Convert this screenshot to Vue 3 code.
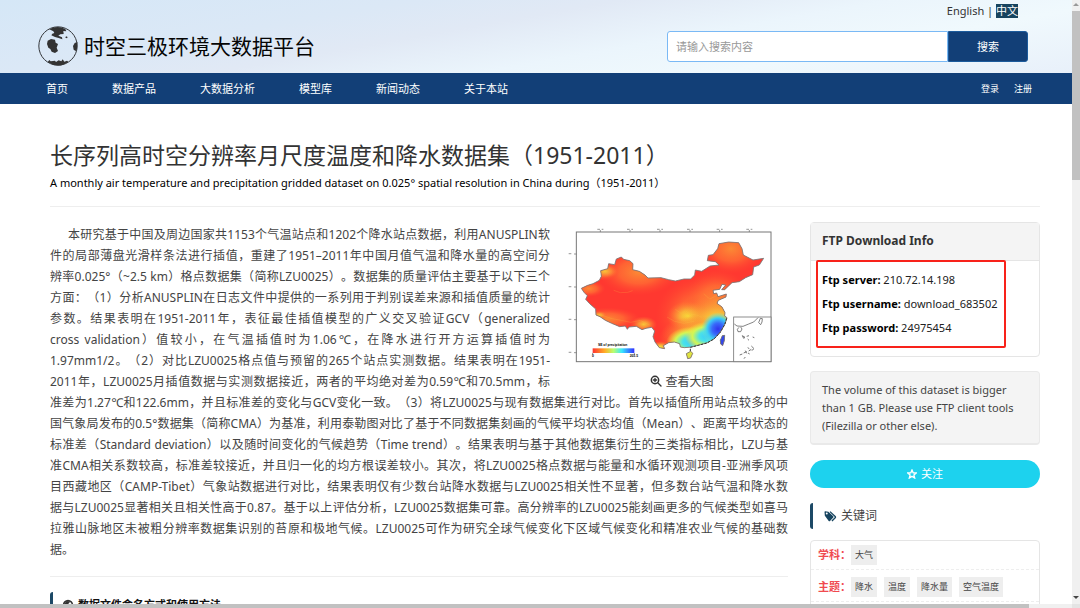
<script setup>
const navItems = ['首页', '数据产品', '大数据分析', '模型库', '新闻动态', '关于本站']

const abstractLines = [
  '本研究基于中国及周边国家共1153个气温站点和1202个降水站点数据，利用ANUSPLIN软',
  '件的局部薄盘光滑样条法进行插值，重建了1951–2011年中国月值气温和降水量的高空间分',
  '辨率0.025°（~2.5 km）格点数据集（简称LZU0025）。数据集的质量评估主要基于以下三个',
  '方面：（1）分析ANUSPLIN在日志文件中提供的一系列用于判别误差来源和插值质量的统计',
  '参数。结果表明在1951-2011年，表征最佳插值模型的广义交叉验证GCV（generalized',
  'cross validation）值较小，在气温插值时为1.06℃，在降水进行开方运算插值时为',
  '1.97mm1/2。（2）对比LZU0025格点值与预留的265个站点实测数据。结果表明在1951-',
  '2011年，LZU0025月插值数据与实测数据接近，两者的平均绝对差为0.59℃和70.5mm，标',
  '准差为1.27℃和122.6mm，并且标准差的变化与GCV变化一致。（3）将LZU0025与现有数据集进行对比。首先以插值所用站点较多的中',
  '国气象局发布的0.5°数据集（简称CMA）为基准，利用泰勒图对比了基于不同数据集刻画的气候平均状态均值（Mean）、距离平均状态的',
  '标准差（Standard deviation）以及随时间变化的气候趋势（Time trend）。结果表明与基于其他数据集衍生的三类指标相比，LZU与基',
  '准CMA相关系数较高，标准差较接近，并且归一化的均方根误差较小。其次，将LZU0025格点数据与能量和水循环观测项目-亚洲季风项',
  '目西藏地区（CAMP-Tibet）气象站数据进行对比，结果表明仅有少数台站降水数据与LZU0025相关性不显著，但多数台站气温和降水数',
  '据与LZU0025显著相关且相关性高于0.87。基于以上评估分析，LZU0025数据集可靠。高分辨率的LZU0025能刻画更多的气候类型如喜马',
  '拉雅山脉地区未被粗分辨率数据集识别的苔原和极地气候。LZU0025可作为研究全球气候变化下区域气候变化和精准农业气候的基础数',
  '据。'
]

const ftp = [
  { label: 'Ftp server:', value: '210.72.14.198' },
  { label: 'Ftp username:', value: 'download_683502' },
  { label: 'Ftp password:', value: '24975454' }
]

const keywords = [
  { label: '学科：', tags: ['大气'] },
  { label: '主题：', tags: ['降水', '温度', '降水量', '空气温度'] }
]
</script>

<template>
  <div class="viewport">
    <div class="page">
      <header class="top">
        <div class="brand">
          <svg class="globe" viewBox="114 78 120 120" aria-hidden="true">
            <circle cx="174" cy="138" r="57.5" fill="none" stroke="#33363a" stroke-width="3" />
            <path fill="#333" d="M148 88 Q172 75 196 87 L199 94 L190 93 L191 102 L181 103 L175 107 L186 112 L187 118 L176 114 L165 111 L154 106 L157 101 L163 99 L160 94 Z" />
            <path fill="#333" d="M143 122 L153 117 L165 119 L167 128 L174 132 L170 143 L174 153 L165 159 L155 155 L151 147 L145 143 L141 132 Z" />
            <path fill="#333" d="M232 126 L224 129 L219 138 L221 149 L227 153 L231 148 Z" />
            <path fill="#333" d="M143 186 L148 180 L152 184 L165 182 L168 186 L176 181 L184 184 L188 178 L193 185 L201 182 L205 185 Q174 208 143 186 Z" />
            <path fill="#333" d="M198 109 l5 2 -2 4 -5 -2z" />
          </svg>
          <span class="brand-name">时空三极环境大数据平台</span>
        </div>
        <div class="tools">
          <div class="lang"><a href="#">English</a> | <a href="#" class="active">中文</a></div>
          <form class="search" @submit.prevent>
            <input type="text" placeholder="请输入搜索内容" aria-label="请输入搜索内容" />
            <button type="submit">搜索</button>
          </form>
        </div>
      </header>

      <nav class="nav">
        <a v-for="item in navItems" :key="item" href="#">{{ item }}</a>
        <div class="account"><a href="#">登录</a><a href="#">注册</a></div>
      </nav>

      <main class="content">
        <div class="heading">
          <h1>长序列高时空分辨率月尺度温度和降水数据集（1951-2011）</h1>
          <p>A monthly air temperature and precipitation gridded dataset on 0.025° spatial resolution in China during（1951-2011）</p>
        </div>
        <div class="columns">
          <article>
            <div class="abstract">
              <figure>
                <svg class="map" viewBox="20 20 621 411" role="img" aria-label="SE of precipitation">
                  <defs>
                    <clipPath id="land">
                      <path d="M63 204 L82 195 L98 190 L117 180 L123 168 L121 151 L142 145 L145 130 L163 133 L168 116 L183 110 L190 117 L208 121 L218 130 L217 148 L237 153 L254 164 L263 173 L302 172 L325 178 L345 182 L371 176 L391 176 L403 164 L405 149 L424 153 L449 137 L476 134 L465 124 L441 121 L444 105 L458 103 L472 85 L476 70 L505 65 L535 67 L545 85 L549 104 L578 119 L610 114 L597 134 L580 140 L577 163 L556 172 L537 184 L515 187 L493 208 L484 208 L496 194 L485 192 L478 207 L458 210 L460 220 L469 218 L473 229 L498 221 L497 230 L474 240 L470 249 L485 260 L494 277 L493 287 L500 292 L494 311 L480 335 L462 355 L441 367 L416 374 L393 380 L372 382 L360 380 L358 370 L342 365 L325 367 L309 376 L313 385 L297 382 L284 365 L278 349 L283 332 L274 321 L257 324 L245 328 L228 318 L206 320 L201 327 L195 317 L178 319 L154 309 L135 300 L119 289 L107 284 L106 266 L88 250 L76 237 L81 226 L71 216 Z M378 400 L391 393 L397 399 L391 413 L382 415 Z M486 346 L493 345 L492 361 L487 376 L481 371 L480 360 Z" />
                    </clipPath>
                    <radialGradient id="cyan"><stop offset="0" stop-color="#38caff" /><stop offset=".35" stop-color="#4be2e8" /><stop offset=".65" stop-color="#d3f655" /><stop offset="1" stop-color="#ffdb35" stop-opacity="0" /></radialGradient>
                    <radialGradient id="blue"><stop offset="0" stop-color="#3034ec" /><stop offset=".35" stop-color="#3869fa" /><stop offset=".65" stop-color="#3ccdf6" /><stop offset="1" stop-color="#7beaba" stop-opacity="0" /></radialGradient>
                    <radialGradient id="yellow"><stop offset="0" stop-color="#f6eb3a" /><stop offset=".4" stop-color="#f8bd39" stop-opacity=".8" /><stop offset="1" stop-color="#ff7932" stop-opacity="0" /></radialGradient>
                    <radialGradient id="orange"><stop offset="0" stop-color="#fb8a35" /><stop offset=".5" stop-color="#ff7534" stop-opacity=".7" /><stop offset="1" stop-color="#ff4a31" stop-opacity="0" /></radialGradient>
                    <linearGradient id="scale"><stop offset="0" stop-color="#ff3430" /><stop offset=".3" stop-color="#ffb127" /><stop offset=".5" stop-color="#b8ff70" /><stop offset=".7" stop-color="#38e8ff" /><stop offset="1" stop-color="#302eff" /></linearGradient>
                  </defs>
                  <rect x="48" y="35" width="584" height="389" fill="#fff" stroke="#777" stroke-width="3" />
                  <path d="M120 29v6M209 29v6M299 29v6M389 29v6M478 29v6M567 29v6M41 101h7M41 200h7M41 298h7M41 397h7" stroke="#666" stroke-width="2" />
                  <path d="M111 27h8M124 27h5M200 27h8M213 27h5M290 27h8M303 27h5M380 27h8M393 27h5M469 27h8M482 27h5M558 27h8M571 27h5M25 100h8M25 199h8M25 297h8M25 396h8" stroke="#aaa" stroke-width="4" />
                  <g clip-path="url(#land)">
                    <rect x="50" y="50" width="570" height="370" fill="#ff3830" />
                    <ellipse cx="235" cy="155" rx="120" ry="70" fill="url(#orange)" />
                    <ellipse cx="512" cy="85" rx="100" ry="75" fill="url(#orange)" />
                    <ellipse cx="130" cy="153" rx="50" ry="28" fill="url(#orange)" />
                    <ellipse cx="134" cy="153" rx="38" ry="20" fill="url(#yellow)" opacity=".6" />
                    <ellipse cx="85" cy="205" rx="50" ry="25" fill="url(#orange)" />
                    <ellipse cx="140" cy="296" rx="100" ry="35" fill="url(#orange)" />
                    <ellipse cx="117" cy="284" rx="22" ry="12" fill="url(#yellow)" opacity=".7" />
                    <ellipse cx="250" cy="312" rx="40" ry="24" fill="url(#yellow)" opacity=".8" />
                    <ellipse cx="425" cy="285" rx="140" ry="120" fill="url(#orange)" />
                    <ellipse cx="470" cy="245" rx="100" ry="100" fill="url(#orange)" />
                    <ellipse cx="384" cy="287" rx="65" ry="45" fill="url(#yellow)" />
                    <ellipse cx="470" cy="302" rx="105" ry="80" fill="url(#yellow)" />
                    <ellipse cx="410" cy="353" rx="115" ry="66" fill="url(#yellow)" />
                    <ellipse cx="394" cy="365" rx="76" ry="46" fill="url(#cyan)" />
                    <ellipse cx="440" cy="348" rx="67" ry="44" fill="url(#cyan)" />
                    <ellipse cx="473" cy="326" rx="50" ry="50" fill="url(#blue)" />
                    <ellipse cx="486" cy="360" rx="20" ry="27" fill="#3446e9" />
                    <ellipse cx="300" cy="380" rx="30" ry="18" fill="url(#yellow)" />
                    <ellipse cx="387" cy="405" rx="18" ry="18" fill="#e0e341" />
                    <path d="M95 282 L125 285 L155 295 L183 300 L211 306 L240 300 L269 315M160 210 L180 217 L202 216 L217 211M345 267 L362 279 L376 272 L390 281 L413 285 L424 292M320 290 L343 303 L371 309 L402 303M430 220 L448 236 L470 225" fill="none" stroke="#f9c845" stroke-width="2" opacity=".3" />
                  </g>
                  <path fill="none" stroke="#777" stroke-width="2.5" d="M63 204 L82 195 L98 190 L117 180 L123 168 L121 151 L142 145 L145 130 L163 133 L168 116 L183 110 L190 117 L208 121 L218 130 L217 148 L237 153 L254 164 L263 173 L302 172 L325 178 L345 182 L371 176 L391 176 L403 164 L405 149 L424 153 L449 137 L476 134 L465 124 L441 121 L444 105 L458 103 L472 85 L476 70 L505 65 L535 67 L545 85 L549 104 L578 119 L610 114 L597 134 L580 140 L577 163 L556 172 L537 184 L515 187 L493 208 L484 208 L496 194 L485 192 L478 207 L458 210 L460 220 L469 218 L473 229 L498 221 L497 230 L474 240 L470 249 L485 260 L494 277 L493 287 L500 292 L494 311 L480 335 L462 355 L441 367 L416 374 L393 380 L372 382 L360 380 L358 370 L342 365 L325 367 L309 376 L313 385 L297 382 L284 365 L278 349 L283 332 L274 321 L257 324 L245 328 L228 318 L206 320 L201 327 L195 317 L178 319 L154 309 L135 300 L119 289 L107 284 L106 266 L88 250 L76 237 L81 226 L71 216 Z M378 400 L391 393 L397 399 L391 413 L382 415 Z M486 346 L493 345 L492 361 L487 376 L481 371 L480 360 Z" />
                  <path fill="none" stroke="#333" stroke-width="3" stroke-dasharray="7 4" d="M499 294 L493 313 L480 336 L461 356 L440 368 L414 375 L390 381 L390 392" />
                  <rect x="520" y="290" width="112" height="134" fill="#fff" stroke="#777" stroke-width="2.5" />
                  <path d="M522 311 L530 317 L548 318 L565 311 L580 305 L593 292M541 320 L545 326 L541 334 L533 334 L531 327 L536 321M595 307 L600 294 L606 295 L605 305 L601 313 Z" fill="none" stroke="#444" stroke-width="2" />
                  <path d="M546 346l8 5-4 3zM559 348l7-2M562 356l4 4M577 350l5 2M538 404l8-3M550 398l9-4M555 391l4 8M562 382l5 3M565 392l8-5M563 398l5 3M573 377l8 8M574 390l6-3M551 415l4-5" fill="none" stroke="#777" stroke-width="3" />
                  <text x="113" y="376" font-size="10" font-weight="700">SE of precipitation</text>
                  <rect x="97" y="384" width="125" height="14" fill="url(#scale)" />
                  <path d="M97 398v5M222 398v5" stroke="#555" stroke-width="2" />
                  <text x="95" y="409" font-size="10" font-weight="700">0</text>
                  <text x="208" y="409" font-size="10" font-weight="700">203.5</text>
                </svg>
                <figcaption>
                  <a href="#">
                    <svg class="icon" viewBox="0 0 36 36" aria-hidden="true"><circle cx="15" cy="15" r="11" fill="none" stroke="currentColor" stroke-width="4.5" /><path d="M10 15h10M15 10v10M24 24l9 9" stroke="currentColor" stroke-width="4" stroke-linecap="round" /></svg>
                    查看大图
                  </a>
                </figcaption>
              </figure>
              <p><template v-for="(line, i) in abstractLines" :key="i"><br v-if="i" /><span :class="{ last: i === abstractLines.length - 1 }">{{ line }}</span></template></p>
            </div>
            <h2 class="section dark">
              <svg class="icon" viewBox="0 0 30 30" aria-hidden="true"><circle cx="15" cy="15" r="11" fill="none" stroke="currentColor" stroke-width="4" /><path d="M5 12 L12 5 L21 6 L16 12 L19 17 L10 21 Z" fill="currentColor" /></svg>
              数据文件命名方式和使用方法
            </h2>
          </article>

          <aside>
            <section class="card ftp">
              <h3>FTP Download Info</h3>
              <div class="ftp-body">
                <p v-for="row in ftp" :key="row.label"><b>{{ row.label }}</b> {{ row.value }}</p>
                <span class="mark"></span>
              </div>
            </section>
            <p class="note">The volume of this dataset is bigger than 1 GB. Please use FTP client tools (Filezilla or other else).</p>
            <button class="follow" type="button">
              <svg class="star" viewBox="0 0 30 30" aria-hidden="true"><path d="M15 3 L18.5 11.5 L28 12 L20.7 18 L23 27 L15 22 L7 27 L9.3 18 L2 12 L11.5 11.5 Z" fill="none" stroke="currentColor" stroke-width="4" /></svg>
              关注
            </button>
            <h2 class="section">
              <svg class="tags" viewBox="0 0 39 34" aria-hidden="true"><path fill="currentColor" d="M1 3 Q1 1 3 1 L13 2 L28 16 Q30 18 28 20 L18 31 Q16 33 14 31 L2 15 Z" /><circle cx="8" cy="8" r="3" fill="#fff" /><path fill="none" stroke="currentColor" stroke-width="4" d="M18 2 L34 17 Q36 19 34 21 L24 31" /></svg>
              关键词
            </h2>
            <dl class="card keywords">
              <div v-for="row in keywords" :key="row.label">
                <dt>{{ row.label }}</dt>
                <dd v-for="tag in row.tags" :key="tag">{{ tag }}</dd>
              </div>
            </dl>
          </aside>
        </div>
      </main>
    </div>
    <div class="vbar"><i class="up"></i><span></span><i class="down"></i></div>
    <div class="hbar"><span></span></div>
    <div class="corner"></div>
  </div>
</template>

<style>
body {
  margin: 0;
  overflow: hidden;
}
</style>

<style scoped>
* {
  box-sizing: border-box;
}
h1, h2, h3, p, figure, dl, dd {
  margin: 0;
}
a {
  color: inherit;
  text-decoration: none;
}
button, input {
  font: inherit;
}
.viewport {
  display: grid;
  grid-template-columns: minmax(0, 1fr) 8px;
  grid-template-rows: minmax(0, 1fr) 4px;
  height: 100vh;
  background: #fff;
  color: #444;
  font-family: "Noto Sans", "Noto Sans CJK SC", sans-serif;
  font-size: 11px;
  line-height: 18px;
  text-spacing-trim: space-all;
}
.page {
  overflow: hidden;
}
.top {
  display: flex;
  justify-content: space-between;
  height: 73px;
  padding: 0 44px 0 38px;
  background: linear-gradient(170deg, #d5e7f7 0%, #dbe8f6 28%, #e1e9f5 42%, #ebf5fc 60%, #f0f9fd 76%, #e8f0fa 100%);
}
.brand {
  display: flex;
  align-items: center;
  gap: 6px;
  padding-top: 19px;
}
.globe {
  width: 40px;
  height: 40px;
}
.brand-name {
  color: #050505;
  font-size: 21px;
  line-height: 32px;
}
.tools {
  width: 361px;
}
.lang {
  padding: 2px 10px 0 0;
  color: #333;
  text-align: right;
}
.lang .active {
  display: inline-block;
  background: #17445f;
  color: #fff;
  line-height: 14px;
}
.search {
  display: flex;
  height: 31px;
  margin-top: 11px;
}
.search input {
  flex: 1;
  min-width: 0;
  padding: 0 8px;
  border: 1px solid #7ab9f5;
  border-radius: 3px 0 0 3px;
  background: #fff;
}
.search input::placeholder {
  color: #999;
}
.search button {
  width: 80px;
  border: 1px solid #1c5b9c;
  border-radius: 0 3px 3px 0;
  background: #123f77;
  color: #fff;
}
.nav {
  display: flex;
  align-items: center;
  gap: 44px;
  height: 31px;
  padding: 0 40px 0 46px;
  background: #123f77;
  color: #fff;
}
.account {
  display: flex;
  gap: 15px;
  margin-left: auto;
  font-size: 9px;
}
.content {
  padding: 34px 32px 0 50px;
}
.heading {
  padding-bottom: 14px;
  border-bottom: 1px solid #eee;
}
.heading h1 {
  color: #333;
  font-size: 23px;
  font-weight: 400;
  line-height: 34px;
}
.heading p {
  padding-top: 2px;
  color: #000;
}
.columns {
  display: grid;
  grid-template-columns: minmax(0, 1fr) 230px;
  gap: 22px;
  padding-top: 15px;
}
.abstract {
  padding: 2px 0 16px;
  border-bottom: 1px solid #eee;
  font-size: 12px;
  line-height: 21px;
}
.abstract p {
  text-align: justify;
  text-align-last: justify;
  text-indent: 18px;
}
.abstract .last {
  display: block;
  text-align-last: left;
  text-indent: 0;
}
figure {
  float: right;
  width: 238px;
  padding: 3px 0 0 17px;
}
.map {
  display: block;
  width: 207px;
  height: 137px;
  font-family: "Liberation Sans", sans-serif;
}
figcaption {
  padding: 9px 0 0 9px;
  line-height: 18px;
  text-align: center;
}
.icon {
  width: 12px;
  height: 12px;
  color: #333;
  vertical-align: -1px;
}
.section {
  display: flex;
  align-items: center;
  gap: 4px;
  height: 26px;
  padding-left: 11px;
  border-left: 3px solid #1c4966;
  border-radius: 3px;
  font-size: 12px;
  font-weight: 400;
}
.section.dark {
  margin-top: 15px;
  padding-left: 9px;
  gap: 4px;
  color: #111;
  font-size: 11px;
  font-weight: 700;
}
.card {
  border: 1px solid #e5e5e5;
  border-radius: 4px;
}
.ftp h3 {
  padding: 9px 11px 10px;
  border-bottom: 1px solid #e5e5e5;
  background: #f4f4f4;
  color: #333;
  font-size: 12px;
  font-weight: 700;
}
.ftp-body {
  position: relative;
  padding: 7px 11px 16px;
  color: #222;
  line-height: 24px;
}
.ftp-body b {
  color: #000;
}
.mark {
  position: absolute;
  inset: -1px 33px 8px 5px;
  border: 2px solid #f8221a;
  border-radius: 2px;
}
.note {
  margin-top: 14px;
  padding: 9px 11px 8px;
  border: 1px solid #e9e9e9;
  border-bottom-width: 2px;
  border-radius: 4px;
  background: #f4f4f4;
  line-height: 18px;
}
.follow {
  display: flex;
  align-items: center;
  justify-content: center;
  gap: 4px;
  width: 100%;
  height: 28px;
  margin: 15px 0;
  border: 0;
  border-radius: 14px;
  background: #1dd2ee;
  color: #fff;
}
.star {
  width: 10px;
  height: 10px;
}
.tags {
  width: 13px;
  height: 11px;
  color: #17445f;
}
.keywords {
  margin-top: 11px;
  padding-bottom: 20px;
}
.keywords > div {
  display: flex;
  gap: 7px;
  padding: 4px 7px;
  border-bottom: 1px dashed #eee;
}
.keywords > div + div {
  padding-top: 7px;
}
dt {
  margin-right: -7px;
  color: #f04b50;
  font-weight: 700;
  line-height: 20px;
}
dd {
  padding: 0 4px;
  background: #eee;
  font-size: 9px;
  line-height: 20px;
}
.vbar {
  display: flex;
  flex-direction: column;
  align-items: center;
  background: #f0f0f0;
}
.vbar span {
  width: 100%;
  height: 28%;
  margin: 5px 0 auto;
  background: #c1c1c1;
}
.up, .down {
  border: 3px solid transparent;
}
.up {
  border-bottom-color: #999;
}
.down {
  margin-bottom: 2px;
  border-top-color: #444;
}
.hbar {
  background: #f0f0f0;
}
.hbar span {
  display: block;
  width: 96%;
  height: 100%;
  background: #c1c1c1;
}
.corner {
  background: #e4e4e4;
}
</style>
